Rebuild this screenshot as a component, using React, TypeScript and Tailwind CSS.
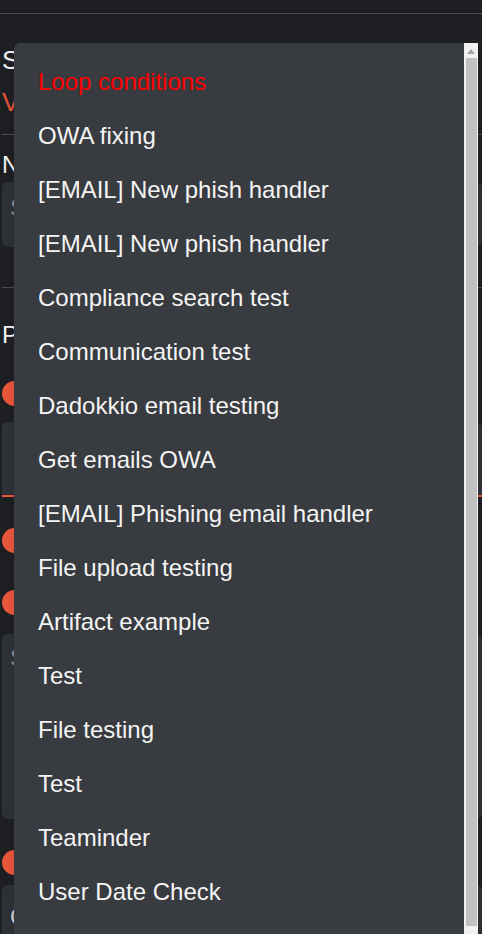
const workflows = [
  "Loop conditions",
  "OWA fixing",
  "[EMAIL] New phish handler",
  "[EMAIL] New phish handler",
  "Compliance search test",
  "Communication test",
  "Dadokkio email testing",
  "Get emails OWA",
  "[EMAIL] Phishing email handler",
  "File upload testing",
  "Artifact example",
  "Test",
  "File testing",
  "Test",
  "Teaminder",
  "User Date Check",
];

function Scrollbar() {
  return (
    <div className="w-[14px] shrink-0 bg-[#f1f1f1] flex flex-col">
      <div className="h-[15px] flex items-start justify-center pt-[6px]">
        <div className="w-0 h-0 border-l-[4px] border-r-[4px] border-b-[5px] border-l-transparent border-r-transparent border-b-[#a3a3a3]" />
      </div>
      <div className="h-[868px] w-[11px] ml-[2px] bg-[#c1c1c1]" />
    </div>
  );
}

export default function App() {
  return (
    <div
      className="relative h-[934px] w-full overflow-hidden bg-[#1e1f23] text-white"
      style={{ fontFamily: '"Liberation Sans", Arial, sans-serif' }}
    >
      <div className="h-[14px] border-b border-[#4b4c51]" />
      <div className="flex flex-col pl-[2px]">
        <h1 className="mt-[31px] text-[26px] leading-[30px] text-[#f2f2f2]">Schedule workflow</h1>
        <p className="mt-[12px] text-[26px] leading-[30px] text-[#e4553a]">Validation needed</p>
        <div className="mt-[17px] border-t border-[#4b4c51]" />
        <label className="mt-[16px] text-[24px] leading-[28px] text-[#f2f2f2]">Name</label>
        <div className="mt-[3px] h-[65px] rounded-md bg-[#2e3135] pt-[12px] px-[8px] text-[24px] leading-[28px] text-[#8a8d92]">
          Schedule name
        </div>
        <div className="mt-[40px] border-t border-[#4b4c51]" />
        <h2 className="mt-[33px] text-[24px] leading-[28px] text-[#f2f2f2]">Parameters</h2>
        <div className="mt-[32px] h-[25px] w-[25px] rounded-full bg-[#e8573b]" />
        <div className="mt-[16px] h-[75px] rounded-t-md bg-[#2f3236] border-b-2 border-[#e8573b]" />
        <div className="mt-[31px] h-[25px] w-[25px] rounded-full bg-[#e8573b]" />
        <div className="mt-[37px] h-[25px] w-[25px] rounded-full bg-[#e8573b]" />
        <div className="mt-[19px] h-[185px] rounded-md bg-[#2e3135] pt-[10px] px-[8px] text-[24px] leading-[28px] text-[#8a8d92]">
          Start node
        </div>
        <div className="mt-[31px] h-[25px] w-[25px] rounded-full bg-[#e8573b]" />
        <div className="mt-[10px] h-[80px] rounded-md bg-[#2e3135] pt-[18px] px-[8px] text-[24px] leading-[28px] text-[#cfd1d4]">
          Cron
        </div>
      </div>

      <div className="absolute left-[14px] top-[43px] bottom-0 w-[464px] flex rounded-tl-md bg-[#383b40] shadow-lg overflow-hidden">
        <ul className="flex-1 pt-[12px]">
          {workflows.map((name, i) => (
            <li
              key={i}
              className={`h-[54px] flex items-center px-[24px] text-[24px] whitespace-nowrap ${
                i === 0 ? "text-[#ff0000]" : "text-[#f4f4f4]"
              }`}
            >
              {name}
            </li>
          ))}
        </ul>
        <Scrollbar />
      </div>
    </div>
  );
}
